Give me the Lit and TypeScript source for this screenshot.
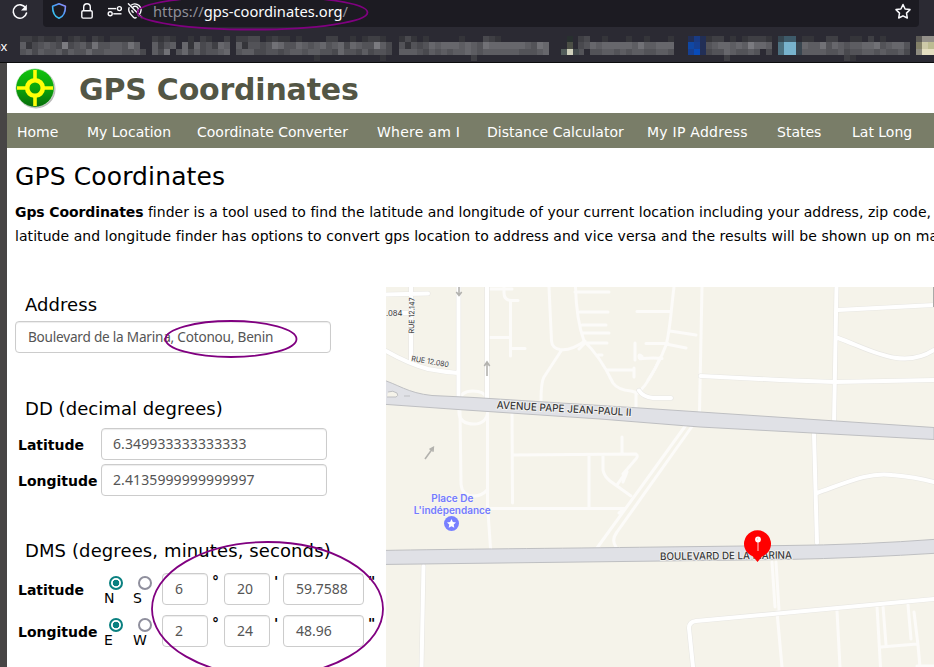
import { LitElement, html, svg, css } from "lit";
import { customElement, property } from "lit/decorators.js";

/* Redacted bookmark labels: [left edge, rows of 6px blocks], 0 = background, 9 = brightest. */
const MOSAIC: [number, string[]][] = [
  [20, ["221211201210210111100", "513454383453744554750", "453544535446445554453", "000000000000000000000"]],
  [152, ["2121001021002", "5245061634265", "5370463534456", "0000000000000"]],
  [236, ["22330121101000022001012100", "51443476446545645637455466", "45533443455455443645544543", "00000000000001000000000000"]],
  [350, ["0000210", "6544853", "4353443", "0000010"]],
  [399, ["1310100000100032100000000", "4143465666565476666665476", "5554354545565455555544456", "0000000000002000000000000"]],
  [578, ["2300100010010001", "3465666665755666", "4044554545544554"]],
  [706, ["12201012221", "45665658665", "34465445403", "00020000000"]],
  [802, ["110022001102010000", "655746545566745664", "555544534455454453", "000000021000000000"]],
];

@customElement("bookmark-strip")
export class BookmarkStrip extends LitElement {
  static styles = css`
    :host { display: block; height: 26px; overflow: hidden; }
    svg { display: block; }
  `;
  render() {
    const ys = [0, 6, 13, 19];
    const hs = [6, 7, 6, 6];
    const cells = MOSAIC.map(([left, rows]) =>
      rows.map((row, r) =>
        [...row].map((ch, i) => {
          const v = Number(ch);
          const c = 43 + v * 10;
          return v ? svg`<rect x=${left + i * 6} y=${ys[r]} width="6" height=${hs[r]} fill="rgb(${c},${c},${c + 5})"/>` : null;
        })
      )
    );
    return html`<svg width="934" height="26" shape-rendering="crispEdges">
      ${cells}
      <rect x="567" y="0" width="6" height="6" fill="#28302f"/><rect x="567" y="6" width="6" height="7" fill="#4c4f46"/>
      <rect x="561" y="13" width="6" height="6" fill="#525c5a"/><rect x="567" y="13" width="6" height="6" fill="#d0d0bc"/>
      <rect x="573" y="13" width="6" height="6" fill="#42494b"/>
      <rect x="688" y="0" width="6" height="6" fill="#222f56"/><rect x="694" y="0" width="6" height="6" fill="#193b84"/><rect x="700" y="0" width="6" height="19" fill="#222f56"/>
      <rect x="688" y="6" width="6" height="7" fill="#0f47a4"/><rect x="688" y="13" width="6" height="6" fill="#163f91"/><rect x="694" y="6" width="6" height="7" fill="#163f91"/><rect x="694" y="13" width="6" height="6" fill="#084bb9"/>
      <rect x="778" y="0" width="6" height="6" fill="#35454f"/><rect x="784" y="0" width="12" height="6" fill="#3e5b6a"/>
      <rect x="778" y="6" width="6" height="13" fill="#4c707f"/><rect x="784" y="6" width="12" height="13" fill="#78b3cd"/>
      <rect x="796" y="6" width="6" height="13" fill="#39454f"/>
      <rect x="916" y="0" width="6" height="6" fill="#5c5a56"/><rect x="922" y="0" width="12" height="6" fill="#94908a"/><rect x="916" y="6" width="6" height="7" fill="#838068"/>
      <rect x="922" y="6" width="6" height="7" fill="#cdc9a8"/><rect x="928" y="6" width="6" height="7" fill="#bdbc92"/>
      <rect x="916" y="13" width="6" height="6" fill="#8f8c80"/><rect x="922" y="13" width="12" height="6" fill="#e4dec0"/>
    </svg>`;
  }
}

@customElement("browser-chrome")
export class BrowserChrome extends LitElement {
  static styles = css`
    :host { display: block; height: 63px; background: #2b2a33; border-bottom: 1px solid #0c0c0d; box-sizing: border-box; overflow: hidden; font-family: "Noto Sans", sans-serif; }
    .bar { display: flex; height: 27px; }
    .reload { width: 43px; height: 27px; }
    .field { display: flex; width: 876px; background: #1c1b22; border-radius: 0 0 4px 4px; box-sizing: border-box; }
    .icons { width: 110px; flex: none; }
    .url { flex: 1; color: #8f8f98; font-size: 14.7px; line-height: 23px; white-space: nowrap; }
    .host { color: #fbfbfe; }
    .star { width: 32px; flex: none; }
    svg { display: block; }
    .marks { display: grid; padding-top: 9px; height: 27px; }
    .marks > * { grid-area: 1 / 1; }
    .tail { color: #fbfbfe; font-size: 13px; line-height: 20px; margin-left: -7px; }
  `;
  render() {
    return html`
      <div class="bar">
        <svg class="reload" viewBox="0 0 43 27" fill="none" stroke="#fbfbfe" stroke-width="1.6">
          <path d="M25.8 8.2A6.7 6.7 0 1 0 26.5 13" stroke-linecap="round"/>
          <path d="M26.8 4.6V10.4H21z" fill="#fbfbfe" stroke="none"/>
        </svg>
        <div class="field">
          <svg class="icons" viewBox="43 0 110 27" width="110" height="27" fill="none" stroke="#fbfbfe" stroke-width="1.4">
            <defs><linearGradient id="shield" x1="1" y1="0" x2="0" y2="1"><stop offset="0" stop-color="#9a8cff"/><stop offset=".45" stop-color="#4a9cf5"/><stop offset="1" stop-color="#31d5ee"/></linearGradient></defs>
            <path d="M59 3.7L65.4 6.2C65.5 12.5 63.4 16.5 59 18.3C54.6 16.5 52.5 12.5 52.6 6.2z" stroke="url(#shield)" stroke-width="1.6" stroke-linejoin="round"/>
            <rect x="81.8" y="10.7" width="10.4" height="7.4" rx="1.3"/>
            <path d="M83.7 10.5V7a3.3 3.3 0 0 1 6.6 0v3.5"/>
            <circle cx="119.4" cy="8.6" r="2"/><path d="M108 8.6h8.2"/>
            <circle cx="110.2" cy="13.8" r="2"/><path d="M113.3 13.8h8.2"/>
            <path d="M131 5.2A6.3 6.3 0 0 1 141.1 10c0 2.8-1.4 4.5-3 6M136.5 17.2q-1.5 1.6-3 0c-2.5-2.4-4.8-4.5-4.8-7.4q0-1.4.6-2.6"/>
            <path d="M132.5 7.7a3.2 3.2 0 1 1 4.5 4.4M131.7 10.2a3.2 3.2 0 0 0 2 2.5"/>
            <path d="M128.4 3.8L142 17.4" stroke-linecap="round"/>
          </svg>
          <div class="url">https://<span class="host">gps-coordinates.org</span>/</div>
          <svg class="star" viewBox="887 0 32 27" width="32" height="27" fill="none" stroke="#fbfbfe" stroke-width="1.5" stroke-linejoin="round">
            <path d="M903 4.5L905.1 9L910 9.6L906.5 13.1L907.3 18L903 15.8L898.7 18L899.5 13.1L896 9.6L900.9 9z"/>
          </svg>
        </div>
      </div>
      <div class="marks"><bookmark-strip></bookmark-strip><span class="tail">ox</span></div>
    `;
  }
}

@customElement("city-map")
export class CityMap extends LitElement {
  static styles = css`
    :host { display: block; background: #f5f3ea; overflow: hidden; }
    svg { display: block; }
    .lane { fill: none; stroke: #fcfbf9; stroke-width: 3; stroke-linecap: round; stroke-linejoin: round; }
    .edge { fill: none; stroke: #e8e7e3; stroke-width: 5.2; stroke-linecap: round; stroke-linejoin: round; }
    .street { fill: none; stroke: #fff; stroke-width: 4; stroke-linecap: round; stroke-linejoin: round; }
    .avenue { fill: #e0e1e6; stroke: #bebfc2; stroke-width: 1; }
    .label { font-family: Inter, sans-serif; fill: #38383a; stroke: #f5f5f2; stroke-width: 1.6; paint-order: stroke; }
    .place { font-family: Inter, sans-serif; font-size: 10px; font-weight: 600; fill: #737bff; text-anchor: middle; stroke: #f8f6f2; stroke-width: 1.5; paint-order: stroke; }
    .arrow { fill: none; stroke: #b3b2ae; stroke-width: 1.6; }
  `;
  render() {
    const lanes = [
      "M490 289h22M504 287v6q0 7 7 7.500h7M510.500 301v55M490 337.500h20M511 348.500h14",
      "M549 287L551.500 341Q552 348 560 349.500Q571 351 585 341M561 351L544 377Q541 382 541 401",
      "M575.500 287C576 306 579 327 584 341Q600 356 613 383Q618 390 631 391L638 393M575 292h34M580 312h28M582 325h24M583 333h26M587 343h20M598 355h4M579 349l5-5M607 370h27M634 368v9M636 393v15",
      "M637 311.500h33M646 343.500h22M635 343v17M642 356.500q-3-3-3 0t3 2q13-1 20 0M640 391Q650 381 660 358",
      "M674 287C671 310 670 332 666 345Q659 364 648 380M670 331l26 4M666 344l20 4M702 287L699.500 412",
      "M459 407V413Q460 424 474 424Q487 424 488 410M459 402Q460 391 473 391Q484 391 487 398",
      "M460 411L461 484Q462 496 474 496Q482 496 487 490M487.500 408L487.500 505L490.500 548",
      "M512 409L512.500 503M514 455L636 454Q639 456 635 460L623 474M622 437v17M589 456v51M603 456v14Q604 476 610 481L631 496M617 485l9-13M623 482l4-10",
      "M488 508.500H625L619 513M686 425L597 548M693 425L617 532Q611 540 616 547",
      "M772 562L775 607M776 562L779 610M777 612L782 667M837 611L840 667M877 606L880.500 667M883 606L886 645M881 647L917 644M908 605L911 639M914 612L918 645L920 667M917 666h17",
    ];
    const streets = [
      "M386 294.500L428 293.500M402 313h8M411 287V361M386 351Q409 364 428 369Q444 372 458 373M458.500 287L458.500 401M487 287V403",
      "M836.500 287L834 424M838 310L934 305M838 338C867 348 902 371 934 350M700.500 376L780 380L835 382L934 380M639 390.500Q643 397 653 398L671 398",
      "M814 434L817 543M817 493C848 482 869 472 892 475Q916 477 934 482M423.500 566L421.500 667M693 667L689 628Q689 622 696 621L934 599",
    ];
    return html`<svg width="548" height="380" viewBox="386 287 548 380">
      ${lanes.map((d) => svg`<path class="lane" d=${d}/>`)}
      ${streets.map((d) => svg`<path class="edge" d=${d}/>`)}
      ${streets.map((d) => svg`<path class="street" d=${d}/>`)}
      <path class="avenue" d="M380 379C398 384 407 393 432 395.500L474 397.500L640 408L934 427.500V439.500L700 427L600 419L458 409.500L380 404z"/>
      <path d="M388 392q5-2 9 1q2 3-1 4h-9" fill="#f5f3ea" stroke="#bebfc2"/><path d="M404 396h6" stroke="#bebfc2"/>
      <path class="avenue" d="M380 550.500C460 549 550 548.500 660 547L786 545.500Q860 545 940 539V553Q860 558 786 559.500L540 562.500L380 564.500z"/>
      <path d="M933.500 287V307" stroke="#a9aaa8" stroke-width="1"/>
      <path class="arrow" d="M459 287v8M456.300 292l2.700 3.500l2.700-3.500M487 376v-14M484.300 366l2.700-4l2.700 4M425 459l8-11M429.500 449.500l3.800-2l-.3 4.300"/>
      <text class="label" font-size="7.500" x="386" y="315.500" textLength="16.500" lengthAdjust="spacingAndGlyphs">.084</text>
      <text class="label" font-size="7.500" transform="translate(414 333.500) rotate(-89)" textLength="36" lengthAdjust="spacingAndGlyphs">RUE 12.147</text>
      <text class="label" font-size="7.500" transform="translate(411 361) rotate(9.500)" textLength="38" lengthAdjust="spacingAndGlyphs">RUE 12.080</text>
      <text class="label" font-size="10.400" font-weight="500" transform="translate(496.500 408.500) rotate(3.200)" textLength="135" lengthAdjust="spacingAndGlyphs">AVENUE PAPE JEAN-PAUL II</text>
      <text class="label" font-size="10.400" font-weight="500" transform="translate(660 560) rotate(-.600)" textLength="132" lengthAdjust="spacingAndGlyphs">BOULEVARD DE LA MARINA</text>
      <text class="place" x="452.300" y="502">Place De</text>
      <text class="place" x="452.300" y="514">L'indépendance</text>
      <circle cx="451.500" cy="523.500" r="7.500" fill="#7880ff"/>
      <path d="M451.500 519l1.350 3l3.200.4l-2.350 2.200l.6 3.200l-2.800-1.600l-2.800 1.600l.6-3.200l-2.350-2.200l3.200-.4z" fill="#fff"/>
      <path d="M757.500 562L753 556.500A13.500 13.500 0 1 1 762 556.500z" fill="red"/>
      <path d="M758 542v9" stroke="#ffb3b3" stroke-width="1.200"/><circle cx="758" cy="539.500" r="2.900" fill="#fff"/><circle cx="757.500" cy="539" r=".7" fill="#ffb0b0"/>
    </svg>`;
  }
}

@customElement("dms-row")
export class DmsRow extends LitElement {
  @property() label = "";
  @property({ type: Array }) dirs: string[] = [];
  @property({ type: Array }) values: string[] = [];
  static styles = css`
    :host { display: grid; grid-template-columns: 86px 29px 29px 46px 16px 46px 13px 81px 12px; height: 42px; margin-left: 3px; font-size: 14px; }
    .name { font-weight: bold; line-height: 34px; }
    .dir { display: flex; flex-direction: column; align-items: flex-start; line-height: 16px; padding-top: 3px; }
    .dot { display: block; margin-left: 5px; width: 14px; height: 14px; box-sizing: border-box; border: 2px solid #8f8f9d; border-radius: 50%; }
    .dot.on { border-color: #0a8080; background: radial-gradient(circle, #0a8080 3px, #fff 3.6px); }
    .box { height: 32px; box-sizing: border-box; border: 1px solid #ccc; border-radius: 4px; padding-left: 12px; font: 14px/30px "Noto Sans", sans-serif; color: #555; box-shadow: inset 0 1px 1px rgba(0,0,0,.075); }
    .unit { font-weight: bold; line-height: 16px; padding-left: 4px; }
  `;
  render() {
    const units = ["°", "'", '"'];
    return html`
      <span class="name">${this.label}</span>
      ${this.dirs.map((d, i) => html`<span class="dir"><i class="dot ${i ? "" : "on"}"></i>${d}</span>`)}
      ${this.values.map((v, i) => html`<span class="box">${v}</span><span class="unit">${units[i]}</span>`)}
    `;
  }
}

@customElement("app-root")
export class AppRoot extends LitElement {
  static styles = css`
    :host { display: block; position: relative; width: 934px; height: 667px; overflow: hidden; background: #fff; color: #000; font-family: "DejaVu Sans", sans-serif; }
    .page { border-left: 7px solid #474545; height: 604px; box-sizing: border-box; overflow: hidden; }
    header { display: flex; height: 50px; align-items: center; padding-left: 8px; }
    .logo { display: block; width: 41px; height: 42px; }
    .brand { margin-left: 23px; font-size: 30px; font-weight: bold; color: #535645; line-height: 50px; padding-top: 4px; letter-spacing: -0.2px; white-space: nowrap; }
    nav { display: grid; grid-template-columns: 70px 110px 180px 110px 160px 130px 75px 80px; height: 35px; padding-left: 10px; background: #797d68; color: #fff; font-size: 14px; line-height: 38px; white-space: nowrap; }
    .loose { letter-spacing: 0.25px; }
    h1 { margin: 14px 0 0 8px; font-size: 25px; font-weight: normal; line-height: 30px; letter-spacing: 0.12px; }
    p { margin: 8px 0 0 8px; font-size: 14px; line-height: 24px; white-space: nowrap; }
    b { letter-spacing: -0.1px; }
    .first-line { letter-spacing: 0.035px; }
    .second-line { letter-spacing: 0.06px; }
    .main { display: flex; margin-top: 39px; }
    .form { width: 379px; flex: none; padding-left: 8px; box-sizing: border-box; }
    h2 { margin: 0 0 0 10px; font-size: 18px; font-weight: normal; line-height: 24px; letter-spacing: 0.06px; white-space: nowrap; }
    .address { margin-top: 6px; }
    .dd { margin-top: 44px; }
    .dms { margin-top: 39px; }
    .dms h2 { letter-spacing: 0.11px; }
    .box { display: block; height: 32px; box-sizing: border-box; border: 1px solid #ccc; border-radius: 4px; padding-left: 12px; font: 14px/30px "Noto Sans", sans-serif; color: #555; box-shadow: inset 0 1px 1px rgba(0,0,0,.075); }
    .digits { padding-left: 11px; letter-spacing: 0.1px; }
    .wide { width: 316px; margin-top: 4px; font-size: 13.6px; letter-spacing: -0.22px; }
    .row { display: grid; grid-template-columns: 83px 226px; height: 36px; padding-left: 3px; }
    .first { margin-top: 7px; }
    .name { font-size: 14px; font-weight: bold; line-height: 34px; }
    .degrees { margin-top: 10px; }
    .ink { position: absolute; left: 0; top: 0; pointer-events: none; }
  `;
  render() {
    const links = ["Home", "My Location", "Coordinate Converter", "Where am I", "Distance Calculator", "My IP Address", "States", "Lat Long"];
    const loose = ["Where am I", "My IP Address"];
    return html`
      <browser-chrome></browser-chrome>
      <div class="page">
        <header>
          <svg class="logo" viewBox="0 0 41 42">
            <defs><linearGradient id="green" x1="0" y1="0" x2="0" y2="1"><stop offset="0" stop-color="#12c30e"/><stop offset=".5" stop-color="#0ba40b"/><stop offset="1" stop-color="#086c0b"/></linearGradient></defs>
            <circle cx="21" cy="22" r="19.500" fill="#b9b9b9"/>
            <circle cx="20" cy="21" r="19.200" fill="url(#green)" stroke="#e4eee2" stroke-width=".6"/>
            <path d="M20 3V12M20 29.500V39M2 21H11.500M28.500 21H38" stroke="#ffff08" stroke-width="3.600"/>
            <circle cx="20" cy="21" r="7.800" fill="none" stroke="#ffff08" stroke-width="4.600"/>
          </svg>
          <div class="brand">GPS Coordinates</div>
        </header>
        <nav>${links.map((l) => html`<span class=${loose.includes(l) ? "loose" : ""}>${l}</span>`)}</nav>
        <h1>GPS Coordinates</h1>
        <p><b>Gps Coordinates</b><span class="first-line"> finder is a tool used to find the latitude and longitude of your current location including your address, zip code,</span><br><span class="second-line">latitude and longitude finder has options to convert gps location to address and vice versa and the results will be shown up on ma</span></p>
        <div class="main">
          <div class="form">
            <div class="address"><h2>Address</h2><span class="box wide">Boulevard de la Marina, Cotonou, Benin</span></div>
            <div class="dd">
              <h2>DD (decimal degrees)</h2>
              <div class="row first"><span class="name">Latitude</span><span class="box digits">6.349933333333333</span></div>
              <div class="row"><span class="name">Longitude</span><span class="box digits">2.4135999999999997</span></div>
            </div>
            <div class="dms">
              <h2>DMS (degrees, minutes, seconds)</h2>
              <div class="degrees">
                <dms-row label="Latitude" .dirs=${["N", "S"]} .values=${["6", "20", "59.7588"]}></dms-row>
                <dms-row label="Longitude" .dirs=${["E", "W"]} .values=${["2", "24", "48.96"]}></dms-row>
              </div>
            </div>
          </div>
          <city-map></city-map>
        </div>
      </div>
      <svg class="ink" width="934" height="667" fill="none" stroke="#800080" stroke-width="1.800">
        <ellipse cx="252.500" cy="12.500" rx="115" ry="17"/>
        <ellipse cx="231" cy="339" rx="65.500" ry="18"/>
        <ellipse cx="267.500" cy="609" rx="115.500" ry="67"/>
      </svg>
    `;
  }
}
